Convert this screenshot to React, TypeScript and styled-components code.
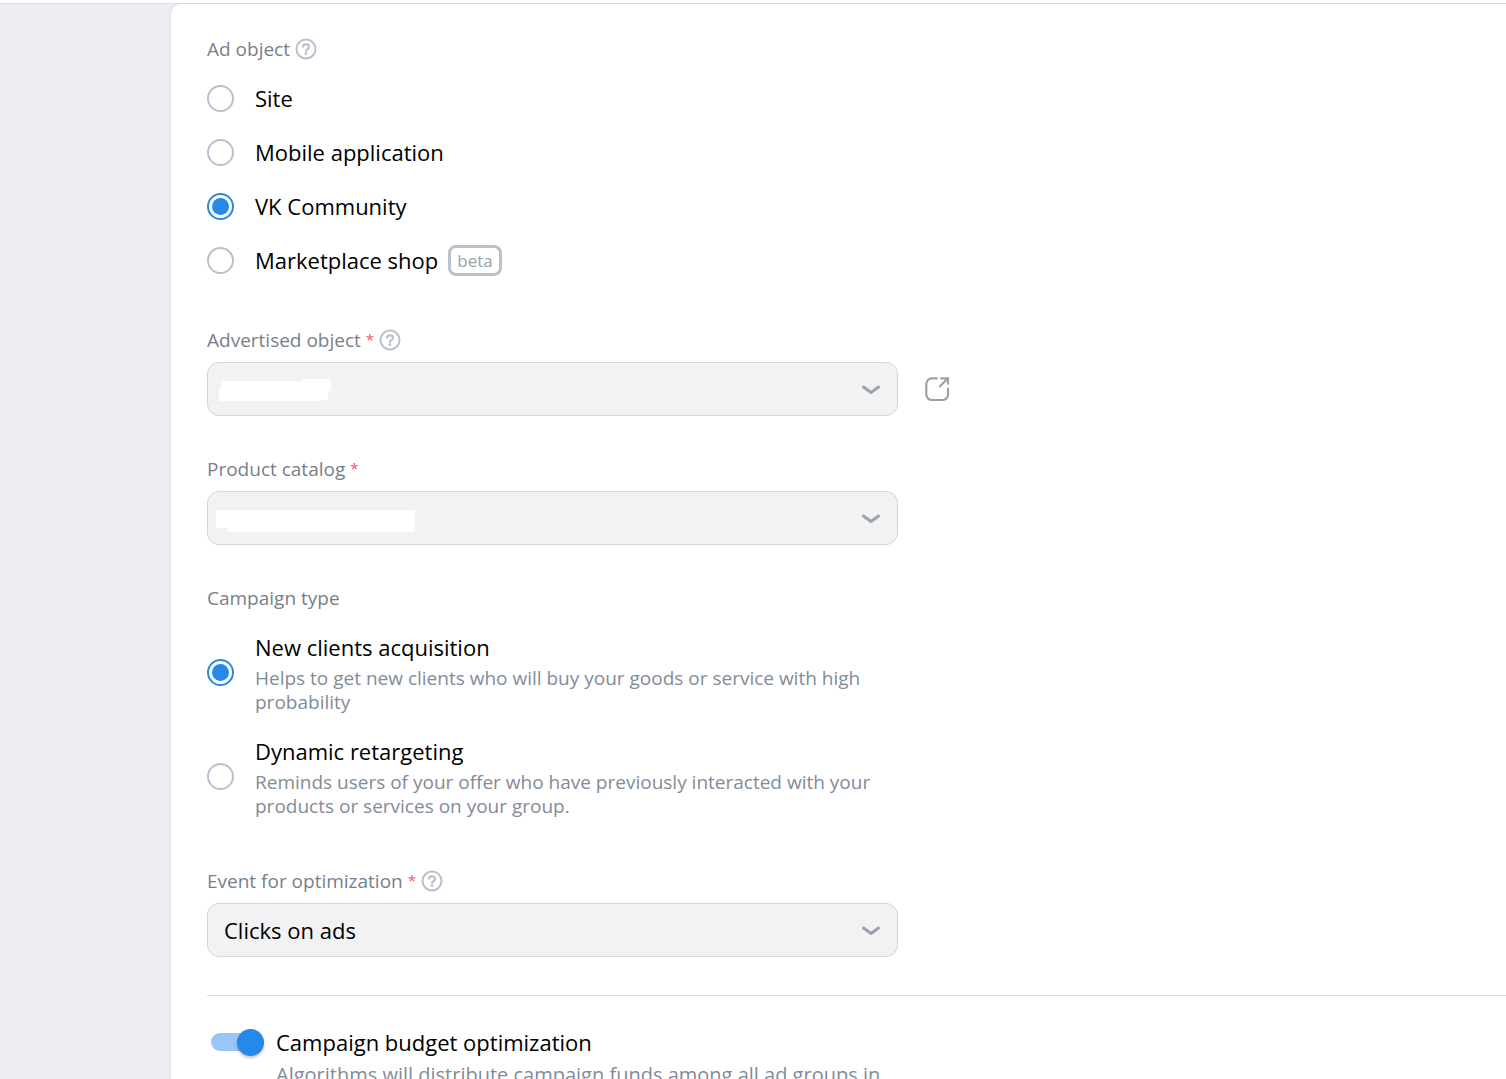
import React from 'react';
import type { ReactNode } from 'react';
import styled, { createGlobalStyle } from 'styled-components';

const colors = {
  accent: '#2688eb',
  track: '#99c6f6',
  caption: '#76808b',
  note: '#818c99',
  outline: '#b8c1cc',
  icon: '#99a2ad',
  line: '#dcdee2',
  field: '#f2f2f5',
  danger: '#ff4d5e',
};

const Global = createGlobalStyle`
  * { box-sizing: border-box; }
  body {
    margin: 0;
    background: #fff;
    color: #000;
    font-family: "Open Sans", "Noto Sans", sans-serif;
  }
`;

const Page = styled.div`
  display: flex;
  flex-direction: column;
  height: 100vh;
  padding-top: 3px;
`;

const Workspace = styled.div`
  display: flex;
  flex: 1;
  min-height: 0;
  border-top: 1px solid ${colors.line};
  background: #ebedf0;
`;

const Side = styled.aside`
  flex: none;
  width: 171px;
`;

const Panel = styled.main`
  flex: 1;
  min-width: 0;
  overflow: auto;
  scrollbar-width: none;
  border-radius: 10px 0 0 0;
  box-shadow: 0 0 2px rgba(0, 0, 0, 0.14);
  background: #fff;
  padding: 32px 0 40px 36px;
`;

const Form = styled.form`
  display: flex;
  flex-direction: column;
  gap: 40px;
`;

const Group = styled.fieldset`
  min-width: 0;
  max-width: 691px;
  border: 0;
  margin: 0;
  padding: 0;
`;

const Field = styled.div`
  display: flex;
  flex-direction: column;
`;

const Caption = styled.div`
  display: flex;
  align-items: center;
  gap: 5px;
  margin-bottom: 9px;
  padding: 0;
  font-size: 19px;
  line-height: 26px;
  color: ${colors.caption};
`;

const Legend = styled(Caption).attrs({ as: 'legend' })``;

const Star = styled.span`
  font-size: 15px;
  line-height: 1;
  vertical-align: 2px;
  color: ${colors.danger};
`;

const IconButton = styled.button`
  display: flex;
  flex: none;
  border: 0;
  padding: 0;
  background: none;
`;

const OpenLink = styled.a`
  display: flex;
  flex: none;
`;

const Choice = styled.label<{ $detailed?: boolean }>`
  display: flex;
  align-items: center;
  gap: 21px;
  padding: ${(p) => (p.$detailed ? 10 : 13)}px 0;
`;

const Radio = styled.input.attrs({ type: 'radio' })`
  appearance: none;
  flex: none;
  width: 27px;
  height: 27px;
  margin: 0;
  border: 2px solid ${colors.outline};
  border-radius: 50%;
  display: grid;
  place-items: center;
  &:checked {
    border-color: ${colors.accent};
  }
  &:checked::after {
    content: '';
    width: 17px;
    height: 17px;
    border-radius: 50%;
    background: ${colors.accent};
  }
`;

const ChoiceText = styled.span`
  display: flex;
  flex-direction: column;
  gap: 5px;
  padding-top: 3px;
`;

const Title = styled.span`
  display: flex;
  align-items: center;
  gap: 10px;
  font-size: 22px;
  line-height: 28px;
`;

const Note = styled.span<{ $large?: boolean }>`
  font-size: ${(p) => (p.$large ? 20 : 19)}px;
  line-height: 24px;
  color: ${colors.note};
`;

const Badge = styled.span`
  margin: -2px 0;
  border: 3px solid ${colors.outline};
  border-radius: 8px;
  padding: 0 6px;
  font-size: 17px;
  line-height: 25px;
  color: ${colors.icon};
`;

const FieldRow = styled.div`
  display: flex;
  align-items: center;
  gap: 26px;
`;

const SelectBox = styled.div`
  display: grid;
  align-items: center;
  width: 100%;
  max-width: 691px;
  > * {
    grid-area: 1 / 1;
  }
  > svg {
    pointer-events: none;
  }
`;

const Select = styled.select`
  appearance: none;
  width: 100%;
  height: 54px;
  border: 1px solid #d3d5d9;
  border-radius: 12px;
  padding: 0 48px 0 16px;
  background: ${colors.field};
  color: #000;
  font: inherit;
  font-size: 22px;
`;

const Arrow = styled.svg`
  justify-self: end;
  margin-right: 16px;
`;

const Divider = styled.hr`
  width: 100%;
  height: 1px;
  border: 0;
  margin: -2px 0 0;
  background: ${colors.line};
`;

const SwitchRow = styled.label`
  display: flex;
  align-items: flex-start;
  gap: 12px;
  max-width: 691px;
  margin-top: -8px;
  padding-left: 4px;
`;

const SwitchText = styled.span`
  display: flex;
  flex-direction: column;
  gap: 7px;
`;

const Switch = styled.input.attrs({ type: 'checkbox', role: 'switch' })`
  appearance: none;
  display: grid;
  align-items: center;
  flex: none;
  width: 53px;
  height: 28px;
  margin: 0;
  &::before,
  &::after {
    content: '';
    grid-area: 1 / 1;
  }
  &::before {
    height: 18px;
    border-radius: 9px;
    background: ${colors.outline};
  }
  &::after {
    width: 27px;
    height: 27px;
    border-radius: 50%;
    background: #fff;
    box-shadow: 0 2px 3px rgba(0, 0, 0, 0.24);
  }
  &:checked::before {
    background: ${colors.track};
  }
  &:checked::after {
    justify-self: end;
    background: ${colors.accent};
  }
`;

function Help({ about }: { about: string }) {
  return (
    <IconButton type="button" aria-label={`Help: ${about}`}>
      <svg width="22" height="22" viewBox="0 0 22 22" fill="none" stroke={colors.outline} strokeLinecap="round">
        <circle cx="11" cy="11" r="9.5" strokeWidth="2" />
        <path d="M8 8.700C8.200 7.200 9.400 6.300 11 6.300c1.800 0 3 1 3 2.500 0 1.100-.6 1.700-1.500 2.300-.9.600-1.400 1-1.400 1.900" strokeWidth="2.2" />
        <circle cx="11" cy="15.7" r="1.4" fill={colors.outline} stroke="none" />
      </svg>
    </IconButton>
  );
}

function Chevron() {
  return (
    <Arrow width="22" height="22" viewBox="0 0 22 22" fill="none" stroke={colors.icon} strokeWidth="3" strokeLinecap="round" strokeLinejoin="round">
      <path d="M3.500 9 11 14.500l7.500-5.500" />
    </Arrow>
  );
}

function ConcealedValue({ shape }: { shape: string }) {
  return (
    <svg width="220" height="54" viewBox="0 0 220 54" fill="#fff" shapeRendering="crispEdges" aria-hidden="true">
      <path d={shape} />
    </svg>
  );
}

function SelectField(props: {
  id: string;
  label: string;
  value?: string;
  help?: boolean;
  concealed?: string;
  action?: ReactNode;
}) {
  return (
    <Field>
      <Caption>
        <label htmlFor={props.id}>
          {props.label} <Star>*</Star>
        </label>
        {props.help && <Help about={props.label} />}
      </Caption>
      <FieldRow>
        <SelectBox>
          <Select id={props.id}>
            <option>{props.value}</option>
          </Select>
          {props.concealed && <ConcealedValue shape={props.concealed} />}
          <Chevron />
        </SelectBox>
        {props.action}
      </FieldRow>
    </Field>
  );
}

const adObjects = [
  { name: 'Site' },
  { name: 'Mobile application' },
  { name: 'VK Community', chosen: true },
  { name: 'Marketplace shop', badge: 'beta' },
];

const campaignTypes = [
  {
    name: 'New clients acquisition',
    note: 'Helps to get new clients who will buy your goods or service with high probability',
    chosen: true,
  },
  {
    name: 'Dynamic retargeting',
    note: 'Reminds users of your offer who have previously interacted with your products or services on your group.',
  },
];

export default function App() {
  return (
    <Page>
      <Global />
      <Workspace>
        <Side />
        <Panel>
          <Form>
            <Group>
              <Legend>
                Ad object <Help about="Ad object" />
              </Legend>
              {adObjects.map((item) => (
                <Choice key={item.name}>
                  <Radio name="ad-object" defaultChecked={item.chosen} />
                  <Title>
                    {item.name}
                    {item.badge && <Badge>{item.badge}</Badge>}
                  </Title>
                </Choice>
              ))}
            </Group>

            <SelectField
              id="advertised-object"
              label="Advertised object"
              help
              concealed="M14 19H95V17H124V29H121V38H115V39H12V27H14Z"
              action={
                <OpenLink href="#advertised-object" aria-label="Open advertised object">
                  <svg width="26" height="26" viewBox="0 0 26 26" fill="none" stroke={colors.icon} strokeWidth="2.2">
                    <path d="M13.700 2.300H7.800a5.500 5.500 0 0 0-5.500 5.500V18.500A5.500 5.500 0 0 0 7.800 24H18.500A5.500 5.500 0 0 0 24 18.500V11.800" />
                    <path d="M16.300 2.300H24V8.500M24 2.300 15.300 11" />
                  </svg>
                </OpenLink>
              }
            />

            <SelectField id="product-catalog" label="Product catalog" concealed="M9 19H208V41H21V37H9Z" />

            <Group>
              <Legend>Campaign type</Legend>
              {campaignTypes.map((item) => (
                <Choice key={item.name} $detailed>
                  <Radio name="campaign-type" defaultChecked={item.chosen} />
                  <ChoiceText>
                    <Title>{item.name}</Title>
                    <Note>{item.note}</Note>
                  </ChoiceText>
                </Choice>
              ))}
            </Group>

            <SelectField id="optimization-event" label="Event for optimization" value="Clicks on ads" help />

            <Divider />

            <SwitchRow>
              <Switch defaultChecked />
              <SwitchText>
                <Title>Campaign budget optimization</Title>
                <Note $large>Algorithms will distribute campaign funds among all ad groups in</Note>
              </SwitchText>
            </SwitchRow>
          </Form>
        </Panel>
      </Workspace>
    </Page>
  );
}
